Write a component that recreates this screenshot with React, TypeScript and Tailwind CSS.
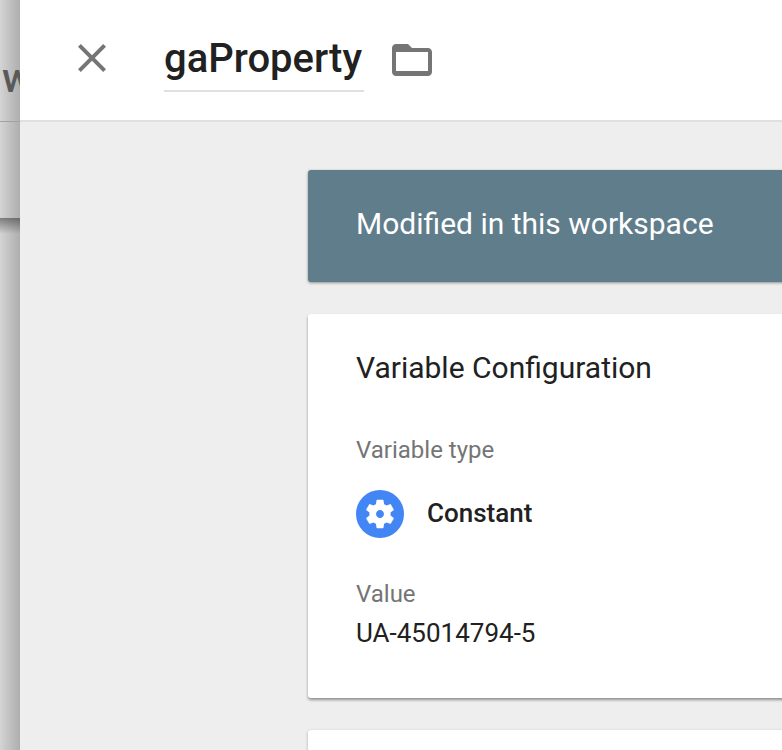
const labelCls = "text-[24px] leading-[32px] text-[#757575]";

function FolderIcon() {
  return (
    <svg width="48" height="48" viewBox="0 0 24 24" className="text-[#757575]" fill="currentColor">
      <path d="M10 4H4c-1.1 0-2 .9-2 2v12c0 1.1.9 2 2 2h16c1.1 0 2-.9 2-2V8c0-1.1-.9-2-2-2h-8l-2-2zm10 13.5H4V8h16v9.5z" />
    </svg>
  );
}

function GearIcon() {
  return (
    <svg width="34" height="34" viewBox="0 0 24 24" fill="#fff">
      <path d="M19.43 12.98c.04-.32.07-.64.07-.98s-.03-.66-.07-.98l2.11-1.65c.19-.15.24-.42.12-.64l-2-3.46c-.12-.22-.39-.3-.61-.22l-2.49 1c-.52-.4-1.08-.73-1.69-.98l-.38-2.65C14.46 2.18 14.25 2 14 2h-4c-.25 0-.46.18-.49.42l-.38 2.65c-.61.25-1.17.59-1.69.98l-2.49-1c-.23-.09-.49 0-.61.22l-2 3.46c-.13.22-.07.49.12.64l2.11 1.65c-.04.32-.07.65-.07.98s.03.66.07.98l-2.11 1.65c-.19.15-.24.42-.12.64l2 3.46c.12.22.39.3.61.22l2.49-1c.52.4 1.08.73 1.69.98l.38 2.65c.03.24.24.42.49.42h4c.25 0 .46-.18.49-.42l.38-2.65c.61-.25 1.17-.59 1.69-.98l2.49 1c.23.09.49 0 .61-.22l2-3.46c.12-.22.07-.49-.12-.64l-2.11-1.65zM12 14.8c-1.55 0-2.8-1.25-2.8-2.8s1.25-2.8 2.8-2.8 2.8 1.25 2.8 2.8-1.25 2.8-2.8 2.8z" />
    </svg>
  );
}

export default function App() {
  return (
    <div className="flex w-[782px] h-[750px] overflow-hidden font-['Roboto',sans-serif] bg-[#eeeeee]">
      {/* page behind the slide-over */}
      <div className="w-[20px] h-full shrink-0 overflow-hidden bg-gradient-to-r from-[#d4d4d4] to-[#aeaeae] flex flex-col">
        <div className="h-[218px] shrink-0 overflow-hidden">
          <div className="h-[122px] border-b border-[#a2a2a2] overflow-hidden">
            <div className="pt-[54px] pl-[2px] text-[41px] leading-[48px] font-medium text-[#5a5a5a]">w</div>
          </div>
        </div>
        <div className="h-[16px] shrink-0 bg-gradient-to-b from-[#00000066] to-transparent" />
      </div>

      <div className="flex-1 min-w-0 flex flex-col">
        <header className="h-[122px] shrink-0 bg-white border-b-2 border-[#e0e0e0] flex items-start">
          <button className="ml-[48px] mt-[34px] w-[48px] h-[48px] flex items-center justify-center text-[#757575]">
            <svg width="48" height="48" viewBox="0 0 24 24" fill="currentColor">
              <path d="M19 6.41 17.59 5 12 10.59 6.41 5 5 6.41 10.59 12 5 17.59 6.41 19 12 13.41 17.59 19 19 17.59 13.41 12z" />
            </svg>
          </button>
          <div className="ml-[48px] mt-[36px] h-[56px] border-b-2 border-[#e0e0e0] w-[200px] text-[40px] leading-[46px] font-medium text-[#212121] whitespace-nowrap">
            gaProperty
          </div>
          <div className="ml-[24px] mt-[36px]">
            <FolderIcon />
          </div>
        </header>

        <main className="flex-1 pl-[288px] pt-[48px] flex flex-col gap-[32px] overflow-hidden">
          <div className="w-[600px] h-[112px] shrink-0 bg-[#607d8b] rounded-[3px] shadow-[0_1px_3px_rgba(0,0,0,0.4)] pl-[48px] pb-[4px] flex items-center text-white text-[30px] leading-[36px]">
            Modified in this workspace
          </div>

          <section className="w-[600px] h-[384px] shrink-0 bg-white rounded-[3px] shadow-[0_2px_3px_rgba(0,0,0,0.4)] pl-[48px] pt-[36px]">
            <h2 className="text-[30px] leading-[36px] text-[#212121]">Variable Configuration</h2>
            <div className={`mt-[48px] ${labelCls}`}>Variable type</div>
            <div className="mt-[24px] flex items-center gap-[23px]">
              <div className="w-[48px] h-[48px] rounded-full bg-[#4285f4] flex items-center justify-center">
                <GearIcon />
              </div>
              <span className="pb-[2px] text-[26px] leading-[32px] font-medium text-[#212121]">Constant</span>
            </div>
            <div className={`mt-[40px] ${labelCls}`}>Value</div>
            <div className="mt-[7px] text-[26px] leading-[32px] text-[#212121]">UA-45014794-5</div>
          </section>

          <div className="w-[600px] h-[100px] shrink-0 bg-white rounded-[3px] shadow-[0_1px_3px_rgba(0,0,0,0.3)]" />
        </main>
      </div>
    </div>
  );
}
